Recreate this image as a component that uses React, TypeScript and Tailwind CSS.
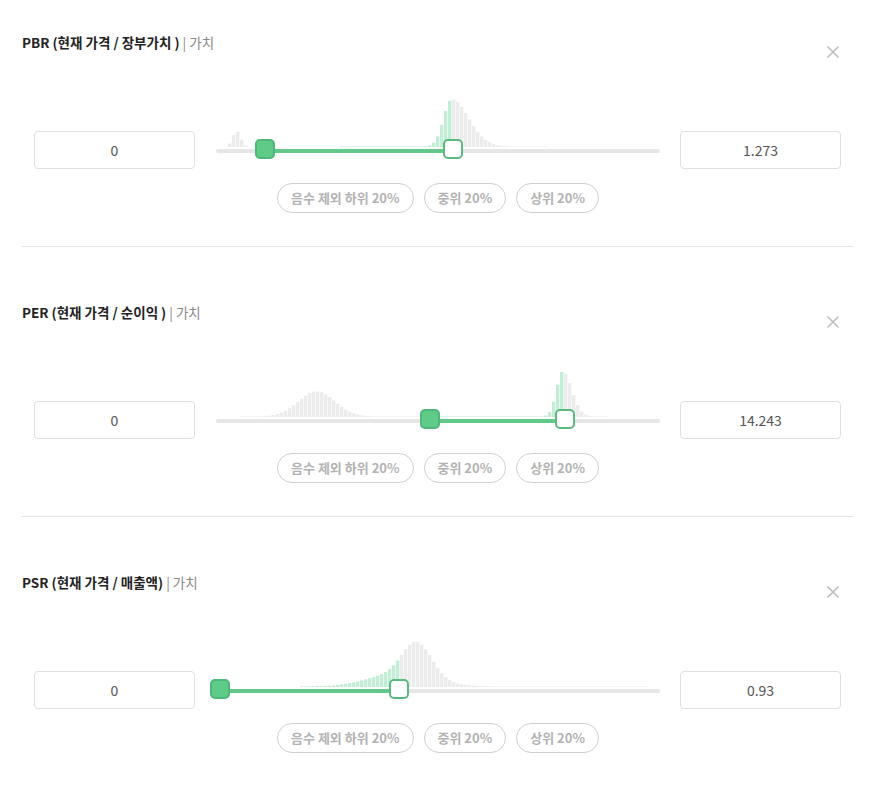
import * as React from "react";

const TRACK_X = 216;
const TRACK_W = 444;
const BAR_PITCH = 4;
const BAR_COUNT = 111;

function g(x: number, mu: number, sl: number, sr: number) {
  const s = x < mu ? sl : sr;
  return Math.exp(-(((x - mu) / s) ** 2) / 2);
}

type Metric = {
  code: string;
  formula: string;
  min: string;
  max: string;
  lo: number; // handle centre, page x
  hi: number;
  shape: (x: number) => number;
};

const metrics: Metric[] = [
  {
    code: "PBR",
    formula: "(현재 가격 / 장부가치 )",
    min: "0",
    max: "1.273",
    lo: 265,
    hi: 453,
    shape: (x) =>
      16 * g(x, 237, 4, 4) + 47 * g(x, 452, 8, 17) + (x > 340 && x < 550 ? 0.6 : 0),
  },
  {
    code: "PER",
    formula: "(현재 가격 / 순이익 )",
    min: "0",
    max: "14.243",
    lo: 430,
    hi: 565,
    shape: (x) =>
      25 * g(x, 317, 18, 18) + 45 * g(x, 563, 6, 9) + (x > 240 && x < 610 ? 0.6 : 0),
  },
  {
    code: "PSR",
    formula: "(현재 가격 / 매출액)",
    min: "0",
    max: "0.93",
    lo: 220,
    hi: 399,
    shape: (x) =>
      35 * g(x, 417, 14, 15) + 12 * g(x, 395, 28, 34) + (x > 300 && x < 650 ? 0.6 : 0),
  },
];

function Histogram({ m }: { m: Metric }) {
  const bars = Array.from({ length: BAR_COUNT }, (_, i) => {
    const cx = TRACK_X + i * BAR_PITCH + BAR_PITCH / 2;
    const h = Math.min(48, m.shape(cx));
    return { i, cx, h };
  });
  return (
    <svg width={TRACK_W} height={48} className="block">
      {bars
        .filter((b) => b.h > 0.4)
        .map((b) => (
          <rect
            key={b.i}
            x={b.i * BAR_PITCH}
            y={48 - b.h}
            width={BAR_PITCH - 0.6}
            height={b.h}
            fill={b.cx >= m.lo && b.cx <= m.hi ? "#c4edd5" : "#ececec"}
          />
        ))}
    </svg>
  );
}

function CloseIcon() {
  return (
    <svg width="12" height="12" viewBox="0 0 12 12" fill="none">
      <path d="M1 1L11 11M11 1L1 11" stroke="#bdbdbd" strokeWidth="1.6" strokeLinecap="round" />
    </svg>
  );
}

function Section({ m, first }: { m: Metric; first: boolean }) {
  const lo = m.lo - TRACK_X;
  const hi = m.hi - TRACK_X;
  return (
    <section className={first ? "pt-[34px]" : "pt-[57px] border-t border-[#e6e6e6]"}>
      <div className="flex items-start justify-between">
        <p className="text-[13.5px] leading-[16px] text-[#222]">
          <span className="font-bold">
            {m.code} {m.formula}
          </span>
          <span className="text-[#888]"> | 가치</span>
        </p>
        <button type="button" className="mt-[12px] mr-[14px] h-[12px] w-[12px]">
          <CloseIcon />
        </button>
      </div>

      <div className="mt-[41px] flex items-end pl-[12px]">
        <div className="flex h-[38px] w-[161px] items-center justify-center rounded-[4px] border border-[#e0e0e0] text-[14px] text-[#555]">
          {m.min}
        </div>
        <div className="ml-[21px] w-[444px]">
          <Histogram m={m} />
          <div className="relative h-[22px]">
            <div className="absolute left-0 right-0 top-[2px] h-[4px] rounded-full bg-[#e6e6e6]" />
            <div
              className="absolute top-[2px] h-[4px] bg-[#62c98a]"
              style={{ left: lo, width: hi - lo }}
            />
            <div
              className="absolute top-[-8px] h-[20px] w-[20px] rounded-[5px] border-2 border-[#4fb779] bg-[#5ecb89]"
              style={{ left: lo - 10 }}
            />
            <div
              className="absolute top-[-8px] h-[20px] w-[20px] rounded-[5px] border-2 border-[#5ab97e] bg-white"
              style={{ left: hi - 10 }}
            />
          </div>
        </div>
        <div className="ml-[20px] flex h-[38px] w-[161px] items-center justify-center rounded-[4px] border border-[#e0e0e0] text-[14px] text-[#555]">
          {m.max}
        </div>
      </div>

      <div className="mt-[14px] mb-[33px] flex pl-[194px]">
        <div className="flex w-[444px] justify-center gap-[10px]">
          {["음수 제외 하위 20%", "중위 20%", "상위 20%"].map((t) => (
            <button
              key={t}
              type="button"
              className="h-[30px] rounded-full border border-[#d0d0d0] px-[13px] text-[13px] font-semibold text-[#b3b3b3]"
            >
              {t}
            </button>
          ))}
        </div>
      </div>
    </section>
  );
}

export default function App() {
  return (
    <div
      className="min-h-[788px] w-[877px] bg-white px-[22px] pr-[24px]"
      style={{ fontFamily: '"Noto Sans CJK KR", "Noto Sans", sans-serif' }}
    >
      {metrics.map((m, i) => (
        <Section key={m.code} m={m} first={i === 0} />
      ))}
    </div>
  );
}
